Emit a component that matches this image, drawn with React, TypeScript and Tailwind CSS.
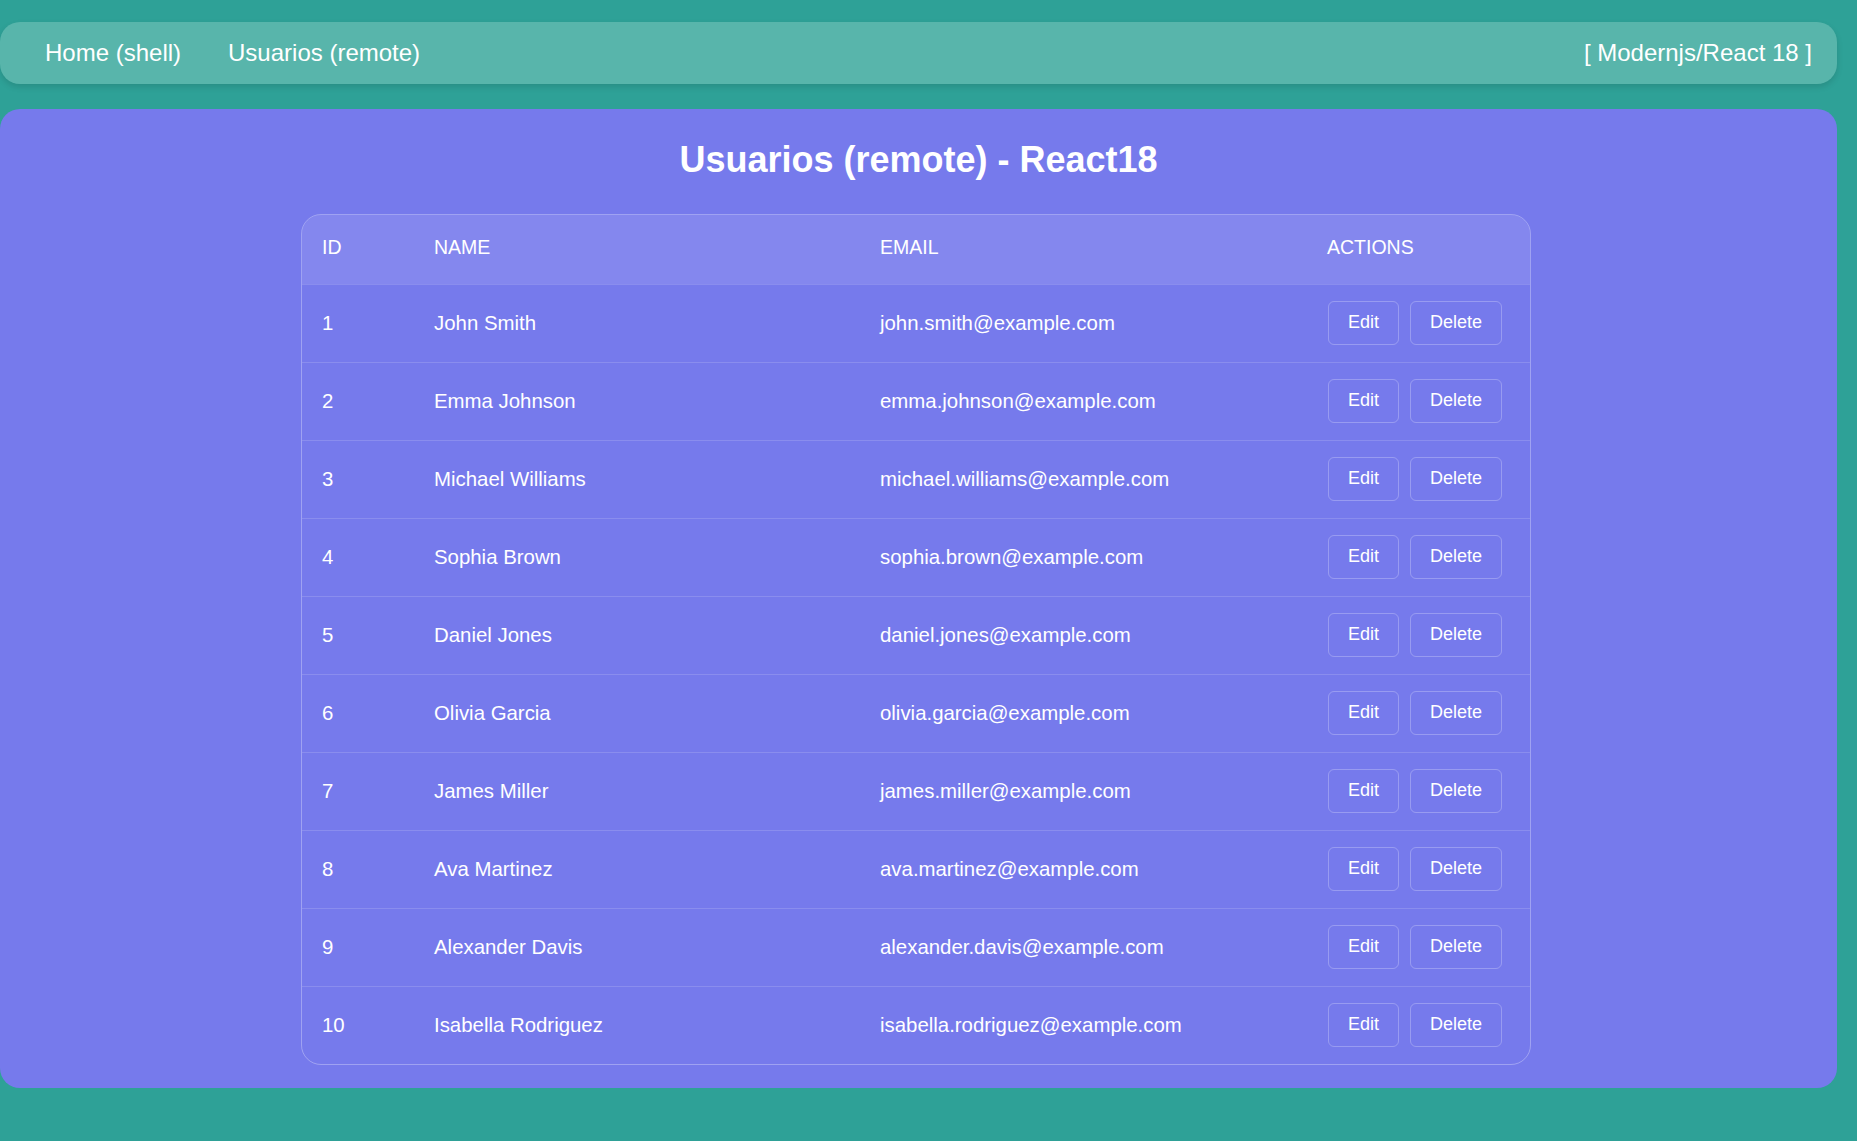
import React from 'react';

const users = [
    { id: 1, name: 'John Smith', email: 'john.smith@example.com' },
    { id: 2, name: 'Emma Johnson', email: 'emma.johnson@example.com' },
    { id: 3, name: 'Michael Williams', email: 'michael.williams@example.com' },
    { id: 4, name: 'Sophia Brown', email: 'sophia.brown@example.com' },
    { id: 5, name: 'Daniel Jones', email: 'daniel.jones@example.com' },
    { id: 6, name: 'Olivia Garcia', email: 'olivia.garcia@example.com' },
    { id: 7, name: 'James Miller', email: 'james.miller@example.com' },
    { id: 8, name: 'Ava Martinez', email: 'ava.martinez@example.com' },
    { id: 9, name: 'Alexander Davis', email: 'alexander.davis@example.com' },
    { id: 10, name: 'Isabella Rodriguez', email: 'isabella.rodriguez@example.com' },
];

const ActionButton = ({ label }: { label: string }) => (
    <button className="h-[44px] px-[19px] pb-[2px] rounded-[6px] border-[1.5px] border-white/25 text-[18px] text-white leading-none">
        {label}
    </button>
);

const Navbar = () => (
    <nav className="h-[62px] flex items-center justify-between rounded-[20px] bg-[#58b5ab] shadow-[0_3px_6px_rgba(0,0,0,0.12)] pl-[45px] pr-[25px] text-[24px] text-white">
        <div className="flex items-center gap-[47px]">
            <a>Home (shell)</a>
            <a>Usuarios (remote)</a>
        </div>
        <span>[ Modernjs/React 18 ]</span>
    </nav>
);

export default function App() {
    return (
        <div
            className="min-h-screen bg-[#2ea197] pt-[22px] pr-[20px]"
            style={{ fontFamily: '"Liberation Sans", Arial, sans-serif' }}
        >
            <Navbar />

            {/* remote panel */}
            <main className="mt-[25px] rounded-[20px] bg-[#767aec] pt-[30px] pb-[23px] text-white">
                <h1 className="text-center text-[36px] font-bold leading-[41px] mb-[34px]">
                    Usuarios (remote) - React18
                </h1>

                <div className="w-[1230px] ml-[301px] rounded-[20px] border border-white/30 overflow-hidden">
                    <table className="w-full table-fixed border-collapse text-left">
                        <colgroup>
                            <col className="w-[112px]" />
                            <col className="w-[446px]" />
                            <col className="w-[447px]" />
                            <col />
                        </colgroup>
                        <thead>
                            <tr className="h-[69px] bg-white/10 text-[19.5px] uppercase">
                                <th className="pl-[20px] pb-[3px] font-normal">ID</th>
                                <th className="pl-[20px] pb-[3px] font-normal">Name</th>
                                <th className="pl-[20px] pb-[3px] font-normal">Email</th>
                                <th className="pl-[20px] pb-[3px] font-normal">Actions</th>
                            </tr>
                        </thead>
                        <tbody className="text-[20.4px]">
                            {users.map((u) => (
                                <tr key={u.id} className="h-[78px] border-t border-white/15">
                                    <td className="pl-[20px]">{u.id}</td>
                                    <td className="pl-[20px]">{u.name}</td>
                                    <td className="pl-[20px]">{u.email}</td>
                                    <td className="pl-[21px]">
                                        <div className="flex gap-[11px]">
                                            <ActionButton label="Edit" />
                                            <ActionButton label="Delete" />
                                        </div>
                                    </td>
                                </tr>
                            ))}
                        </tbody>
                    </table>
                </div>
            </main>
        </div>
    );
}
